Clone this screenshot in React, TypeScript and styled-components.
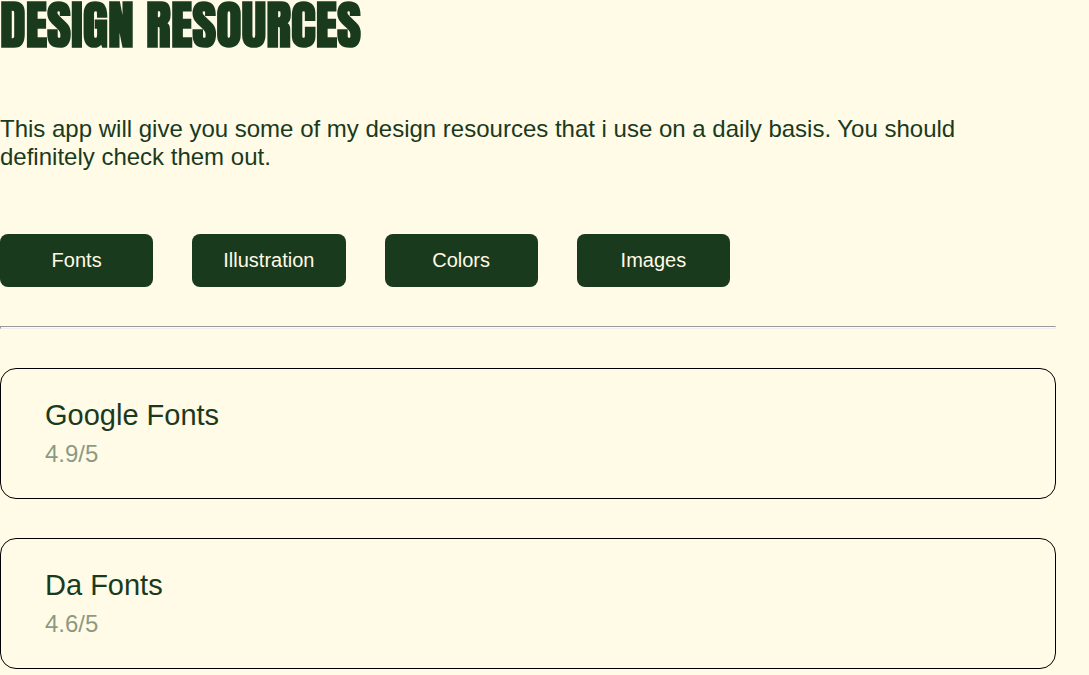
import React, { useState } from "react";
import styled, { createGlobalStyle } from "styled-components";

const GlobalStyle = createGlobalStyle`
  * { box-sizing: border-box; }
  body {
    margin: 0;
    background: #fffbe7;
    color: #1a3a1d;
    font-family: "Liberation Sans", Arial, sans-serif;
  }
`;

const Page = styled.main`
  padding-right: 33px;
`;

const Title = styled.h1`
  margin: 0;
  font-family: Impact, Anton, sans-serif;
  font-size: 52px;
  line-height: 50px;
  font-weight: 900;
  text-transform: uppercase;
`;

const Intro = styled.p`
  margin: 65px 0 0;
  max-width: 1000px;
  font-size: 24px;
  line-height: 28px;
`;

const Filters = styled.nav`
  display: grid;
  grid-template-columns: repeat(4, 1fr);
  gap: 39px;
  max-width: 730px;
  margin: 63px 0 39px;
`;

const FilterButton = styled.button`
  height: 53px;
  border: 0;
  border-radius: 8px;
  background: #1a3a1d;
  color: #fffbe7;
  font-family: inherit;
  font-size: 20px;
  cursor: pointer;
`;

const Divider = styled.hr`
  height: 3px;
  margin: 0 0 39px;
`;

const List = styled.section`
  display: grid;
  gap: 39px;
`;

const Card = styled.article`
  padding: 28px 44px 30px;
  border: 1px solid #000;
  border-radius: 16px;
`;

const Name = styled.h2`
  margin: 0 0 7px;
  font-size: 29px;
  line-height: 36px;
  font-weight: 400;
`;

const Rating = styled.p`
  margin: 0;
  opacity: 0.5;
  font-size: 24px;
  line-height: 28px;
`;

const resources: Record<string, { name: string; rating: string }[]> = {
  Fonts: [
    { name: "Google Fonts", rating: "4.9/5" },
    { name: "Da Fonts", rating: "4.6/5" },
  ],
  Illustration: [],
  Colors: [],
  Images: [],
};

export default function App() {
  const [category, setCategory] = useState("Fonts");
  return (
    <>
      <GlobalStyle />
      <Page>
        <Title>Design Resources</Title>
        <Intro>
          This app will give you some of my design resources that i use on a daily basis. You should
          definitely check them out.
        </Intro>
        <Filters>
          {Object.keys(resources).map((key) => (
            <FilterButton key={key} type="button" onClick={() => setCategory(key)}>
              {key}
            </FilterButton>
          ))}
        </Filters>
        <Divider />
        <List>
          {resources[category].map((item) => (
            <Card key={item.name}>
              <Name>{item.name}</Name>
              <Rating>{item.rating}</Rating>
            </Card>
          ))}
        </List>
      </Page>
    </>
  );
}
